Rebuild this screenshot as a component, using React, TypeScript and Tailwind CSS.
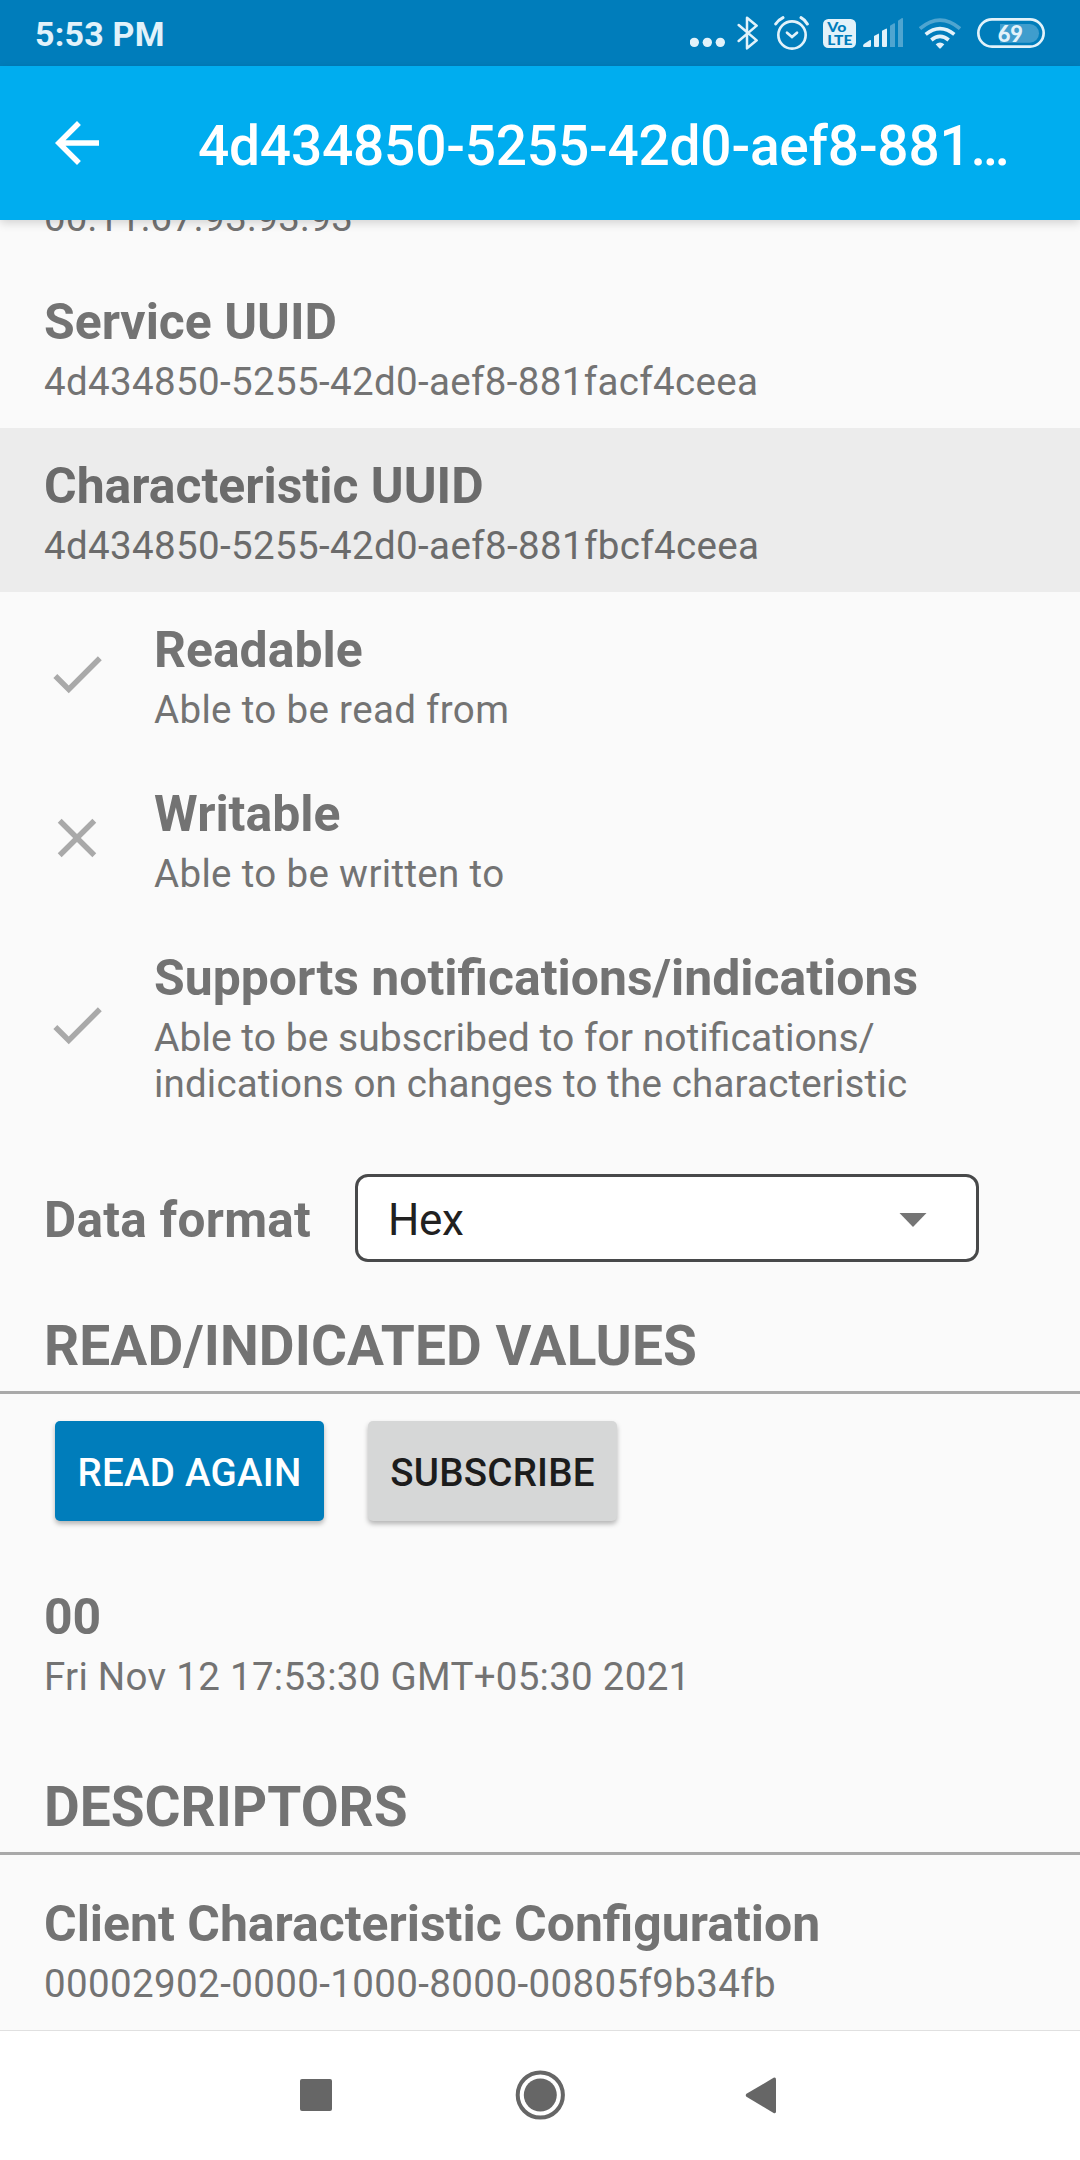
import type { ReactNode } from "react";

function StatusBar() {
  return (
    <div className="flex h-[66px] shrink-0 items-start bg-[#007dbb] pl-[35px] pr-[35px] text-[#e2f2fa]">
      <div className="mt-[14px] text-[34px] leading-[40px] font-bold tracking-[0.2px]">5:53 PM</div>
      <div className="mt-[16px] ml-auto flex">
        <svg className="mr-[10px] h-[34px] w-[36px]" viewBox="60 48 108 102" fill="currentColor">
          <circle cx="73" cy="127" r="14" />
          <circle cx="112" cy="127" r="14" />
          <circle cx="151" cy="127" r="14" />
        </svg>
        <svg className="mr-[14px] h-[34px] w-[24px]" viewBox="198 48 72 102" fill="none" stroke="currentColor" strokeWidth="7.5" strokeLinecap="round" strokeLinejoin="round">
          <path d="M206 75 L260 121 L231 145 V53 L260 77 L206 123" />
        </svg>
        <svg className="mr-[14px] h-[34px] w-[35px]" viewBox="312 48 105 102" fill="none" stroke="currentColor" strokeLinecap="round">
          <circle cx="366" cy="105" r="41" strokeWidth="8" />
          <path d="M351 98 L366 111 L381 98" strokeWidth="8" />
          <path d="M317 72 Q325 60 339 53 M393 53 Q406 60 412 72" strokeWidth="9" />
        </svg>
        <svg className="mr-[7px] h-[34px] w-[33px] font-['Lato',sans-serif]" viewBox="459 48 99 102">
          <rect x="459" y="57" width="99" height="87" rx="16" fill="currentColor" />
          <text x="472" y="95" fontSize="37" fontWeight="900" fill="#007dbb" textLength="57" lengthAdjust="spacingAndGlyphs">Vo</text>
          <text x="472" y="134" fontSize="42" fontWeight="900" fill="#007dbb" textLength="75" lengthAdjust="spacingAndGlyphs">LTE</text>
        </svg>
        <svg className="mr-[16px] h-[34px] w-[40px]" viewBox="579 48 120 102" fill="currentColor">
          <path d="M579 138 Q579 134 583 131 L600 120 Q603 119 603 122 V137 Q603 141 599 141 H582 Q579 141 579 138Z" />
          <path d="M612 108 L625 101 Q627 100 627 103 V138 Q627 141 624 141 H615 Q612 141 612 138Z" />
          <path d="M636 92 L648 86 Q651 85 651 88 V138 Q651 141 648 141 H639 Q636 141 636 138Z" />
          <path opacity=".35" d="M660 77 L672 70 Q675 69 675 72 V141 H660Z" />
          <path opacity=".35" d="M684 62 L696 54 Q699 53 699 57 V141 H684Z" />
        </svg>
        <svg className="mr-[16px] h-[34px] w-[42px]" viewBox="747 48 126 102" fill="none" stroke="currentColor" strokeWidth="11">
          <path opacity=".35" d="M750 86 Q810 35 870 86" />
          <path d="M767 103 Q810 69 853 103" />
          <path d="M784 120 Q810 98 836 120" />
          <path d="M797 133 Q810 122 823 133 L813 144 Q810 147 807 144Z" fill="currentColor" stroke="none" />
        </svg>
        <svg className="h-[34px] w-[68px] font-['Lato',sans-serif]" viewBox="921 48 204 102">
          <rect x="925" y="58" width="196" height="82" rx="41" fill="none" stroke="currentColor" strokeWidth="8" />
          <path d="M990 72 H1079 A28 28 0 0 1 1079 128 H990Z" fill="currentColor" opacity=".28" />
          <text x="983" y="125" fontSize="70" fontWeight="900" fill="currentColor" textLength="76" lengthAdjust="spacingAndGlyphs">69</text>
        </svg>
      </div>
    </div>
  );
}

function AppBar() {
  return (
    <header className="z-10 flex h-[154px] shrink-0 items-start bg-[#00adef] text-white shadow-[0_3px_9px_rgba(0,0,0,0.16)]">
      <svg className="mt-[44px] ml-[44px] h-[66px] w-[66px]" viewBox="0 0 24 24" fill="currentColor">
        <path d="M20 11H7.83l5.59-5.59L12 4l-8 8 8 8 1.41-1.41L7.83 13H20v-2z" />
      </svg>
      <h1 className="mt-[48px] ml-[88px] text-[55px] leading-[64px] font-medium tracking-[-0.2px] whitespace-nowrap">
        4d434850-5255-42d0-aef8-881…
      </h1>
    </header>
  );
}

function Item({ title, icon, active, children }: { title: string; icon?: "check" | "close"; active?: boolean; children: ReactNode }) {
  return (
    <div className={active ? "flex items-center bg-[#ececec] px-[44px] pt-[29px] pb-[23px] text-[#6b6b6b]" : "flex items-center px-[44px] pt-[29px] pb-[23px]"}>
      {icon && (
        <svg className="mr-[44px] h-[66px] w-[66px] shrink-0 -translate-y-[3px] text-[#a9a9a9]" viewBox="0 0 24 24" fill="currentColor">
          {icon === "check" ? (
            <path d="M9 16.17 4.83 12l-1.42 1.41L9 19 21 7l-1.41-1.41z" />
          ) : (
            <path d="M19 6.41 17.59 5 12 10.59 6.41 5 5 6.41 10.59 12 5 17.59 6.41 19 12 13.41 17.59 19 19 17.59 13.41 12z" />
          )}
        </svg>
      )}
      <div>
        <div className="mb-[8px] text-[49.9px] leading-[58px] font-bold">{title}</div>
        <div className="text-[38.5px] leading-[46px]">{children}</div>
      </div>
    </div>
  );
}

function SectionHeading({ children }: { children: ReactNode }) {
  return <h2 className="border-b-3 border-[#a9a9a9] px-[44px] pb-[13px] text-[55px] leading-[64px] font-bold">{children}</h2>;
}

function NavBar() {
  return (
    <nav className="z-10 flex h-[130px] shrink-0 items-center border-t border-[#e0e0e0] bg-white pb-px pl-[300px] text-[#666]">
      <div className="size-[32px] rounded-[2px] bg-current" />
      <svg className="ml-[183px] size-[50px]" viewBox="0 0 50 50">
        <circle cx="25.3" cy="25" r="22.6" fill="none" stroke="currentColor" strokeWidth="4" />
        <circle cx="25.3" cy="25" r="16.5" fill="currentColor" />
      </svg>
      <svg className="ml-[180px] h-[37px] w-[31px]" viewBox="0 0 32 38" preserveAspectRatio="none" fill="currentColor">
        <path d="M1.5 17.3 L29.5 .8 Q32 0 32 2.5 V35.5 Q32 38 29.5 37 L1.5 20.3 Q0 18.8 1.5 17.3Z" />
      </svg>
    </nav>
  );
}

export default function App() {
  return (
    <div className="flex h-[2160px] w-[1080px] flex-col overflow-hidden bg-[#fafafa] font-['Roboto',sans-serif] text-[#737373]">
      <StatusBar />
      <AppBar />
      <main className="min-h-0 flex-1 overflow-hidden">
        <div className="-mt-[25px] px-[44px] pb-[23px] text-[38.5px] leading-[46px] tracking-[0.17px]">00:11:67:93:93:93</div>
        <Item title="Service UUID"><span className="tracking-[0.35px]">4d434850-5255-42d0-aef8-881facf4ceea</span></Item>
        <Item title="Characteristic UUID" active><span className="tracking-[0.36px]">4d434850-5255-42d0-aef8-881fbcf4ceea</span></Item>
        <Item title="Readable" icon="check"><span className="tracking-[0.34px]">Able to be read from</span></Item>
        <Item title="Writable" icon="close"><span className="tracking-[0.34px]">Able to be written to</span></Item>
        <Item title="Supports notifications/indications" icon="check">
          <span className="text-[39.1px]">Able to be subscribed to for notifications/</span>
          <br />
          <span className="tracking-[0.17px]">indications on changes to the characteristic</span>
        </Item>
        <div className="mt-[44px] flex items-center pl-[44px]">
          <div className="pt-[4px] text-[49.5px] leading-[58px] font-bold tracking-[0.27px]">Data format</div>
          <div className="ml-auto mr-[101px] flex h-[88px] w-[624px] items-center rounded-[13px] border-3 border-[#48494a] bg-white pl-[30px] text-[44px] leading-[52px] text-[#212121]">
            <span className="pt-[4px] tracking-[-0.4px]">Hex</span>
            <svg className="mt-[3px] mr-[49px] ml-auto h-[14px] w-[28px] text-[#757575]" viewBox="0 0 28 14" fill="currentColor">
              <path d="M.5 0H27.5L14 14Z" />
            </svg>
          </div>
        </div>
        <div className="mt-[52px] tracking-[0.1px]">
          <SectionHeading>READ/INDICATED VALUES</SectionHeading>
        </div>
        <div className="mt-[27px] flex gap-[44px] pl-[55px] text-[38.5px] font-medium tracking-[0.25px]">
          <button className="h-[100px] w-[269px] rounded-[5px] bg-[#007dbb] pt-[3px] text-white shadow-[0_3px_5px_rgba(0,0,0,0.28)]">READ AGAIN</button>
          <button className="h-[100px] w-[249px] rounded-[5px] bg-[#d6d7d7] pt-[3px] text-[#1c1c1c] shadow-[0_3px_5px_rgba(0,0,0,0.28)]">SUBSCRIBE</button>
        </div>
        <div className="mt-[38px]">
          <Item title="00"><span className="tracking-[0.28px]">Fri Nov 12 17:53:30 GMT+05:30 2021</span></Item>
        </div>
        <div className="mt-[52px]">
          <SectionHeading>DESCRIPTORS</SectionHeading>
        </div>
        <div className="mt-[11px]">
          <Item title="Client Characteristic Configuration"><span className="tracking-[0.38px]">00002902-0000-1000-8000-00805f9b34fb</span></Item>
        </div>
      </main>
      <NavBar />
    </div>
  );
}
